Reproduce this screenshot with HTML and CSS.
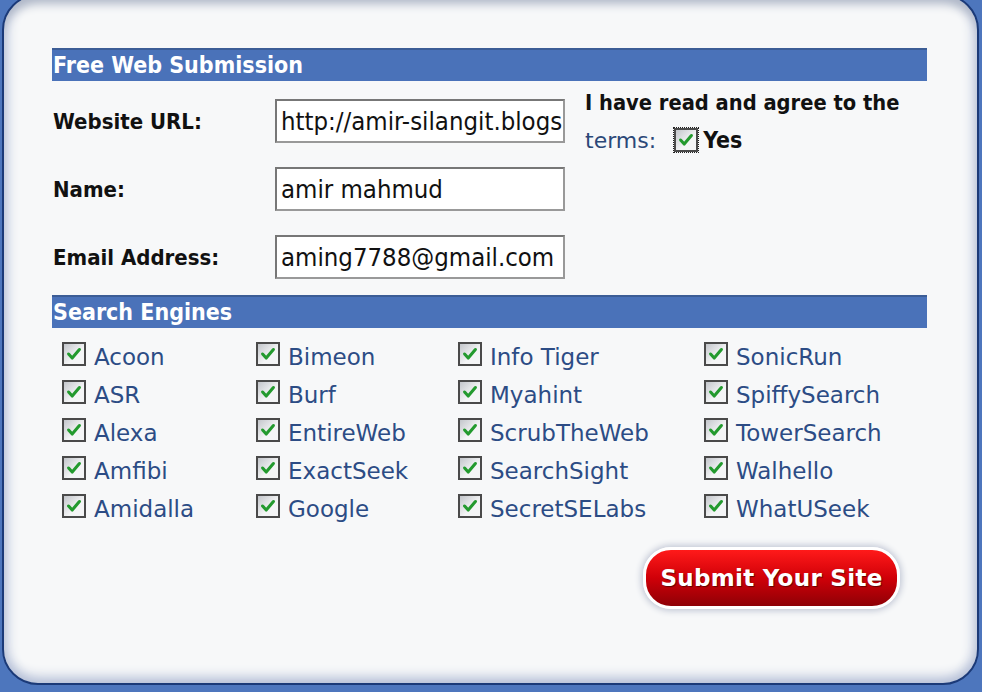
FILE: index.html
```html
<!DOCTYPE html>
<html lang="en">
<head>
    <meta charset="UTF-8">
    <title>Free Web Submission</title>
    <link rel="stylesheet" href="styles.css">
</head>
<body>
    <div class="panel">
        <div class="bar">Free Web Submission</div>

        <div class="details">
            <div class="fields">
                <div class="field">
                    <label class="label">Website URL:</label>
                    <div class="input">http://amir-silangit.blogs</div>
                </div>
                <div class="field">
                    <label class="label">Name:</label>
                    <div class="input">amir mahmud</div>
                </div>
                <div class="field">
                    <label class="label">Email Address:</label>
                    <div class="input">aming7788@gmail.com</div>
                </div>
            </div>
            <div class="agree">
                <div class="agree-line">I have read and agree to the</div>
                <div class="agree-line">
                    <span class="terms">terms:</span>
                    <span class="focus"><span class="check"></span></span>
                    <span class="yes">Yes</span>
                </div>
            </div>
        </div>

        <div class="bar">Search Engines</div>

        <div class="engines">
            <div class="engine"><span class="check"></span>Acoon</div>
            <div class="engine"><span class="check"></span>Bimeon</div>
            <div class="engine"><span class="check"></span>Info Tiger</div>
            <div class="engine"><span class="check"></span>SonicRun</div>

            <div class="engine"><span class="check"></span>ASR</div>
            <div class="engine"><span class="check"></span>Burf</div>
            <div class="engine"><span class="check"></span>Myahint</div>
            <div class="engine"><span class="check"></span>SpiffySearch</div>

            <div class="engine"><span class="check"></span>Alexa</div>
            <div class="engine"><span class="check"></span>EntireWeb</div>
            <div class="engine"><span class="check"></span>ScrubTheWeb</div>
            <div class="engine"><span class="check"></span>TowerSearch</div>

            <div class="engine"><span class="check"></span>Amfibi</div>
            <div class="engine"><span class="check"></span>ExactSeek</div>
            <div class="engine"><span class="check"></span>SearchSight</div>
            <div class="engine"><span class="check"></span>Walhello</div>

            <div class="engine"><span class="check"></span>Amidalla</div>
            <div class="engine"><span class="check"></span>Google</div>
            <div class="engine"><span class="check"></span>SecretSELabs</div>
            <div class="engine"><span class="check"></span>WhatUSeek</div>
        </div>

        <div class="actions">
            <button class="submit">Submit Your Site</button>
        </div>
    </div>
</body>
</html>
```

FILE: styles.css
```css
body {
    margin: 0;
    background: #4d76bd;
    height: 692px;
    overflow: hidden;
    font-family: "DejaVu Sans Condensed", "DejaVu Sans", sans-serif;
}

.panel {
    margin: -6px 3px 0 2px;
    height: 691px;
    box-sizing: border-box;
    padding: 52px 0 0 48px;
    background: #f7f8f9;
    border: 2px solid #1b3a78;
    border-radius: 36px;
    box-shadow: inset 0 12px 10px -4px #b0b8c8, inset 0 -10px 12px -4px #b7c1d8, inset 10px 0 12px -6px #c4cde0, inset -10px 0 12px -6px #c4cde0;
}

.bar {
    width: 875px;
    height: 33px;
    box-sizing: border-box;
    background: #4a72b9;
    border-top: 2px solid #3c5d96;
    color: #fff;
    font-weight: bold;
    font-size: 23px;
    line-height: 31px;
    padding-left: 1px;
}

/* formulario */
.details {
    display: flex;
    padding: 18px 0 16px 1px;
}

.fields {
    display: flex;
    flex-direction: column;
    gap: 24px;
}

.field {
    display: flex;
    align-items: center;
}

.label {
    width: 222px;
    font-weight: bold;
    font-size: 22px;
    color: #111;
}

.input {
    width: 290px;
    height: 44px;
    box-sizing: border-box;
    border: 2px solid #777;
    border-right-color: #999;
    border-bottom-color: #999;
    background: #fff;
    font-size: 25.5px;
    line-height: 40px;
    padding-left: 4px;
    color: #111;
    white-space: nowrap;
    overflow: hidden;
}

.agree {
    margin-left: 20px;
    margin-top: -16px;
    font-size: 21.7px;
}

.agree-line {
    display: flex;
    align-items: center;
    height: 38px;
    font-weight: bold;
    color: #111;
}

.terms {
    font-family: "DejaVu Sans", sans-serif;
    font-weight: normal;
    font-size: 22px;
    color: #2b4878;
    margin-right: 18px;
}

.focus {
    display: inline-flex;
    outline: 1px dotted #222;
    margin-right: 5px;
}

.yes {
    font-weight: bold;
    font-size: 23px;
}

/* casillas */
.check {
    display: inline-block;
    flex: none;
    width: 24px;
    height: 24px;
    box-sizing: border-box;
    border: 2px solid #4a4a4a;
    background: url("data:image/svg+xml,%3Csvg xmlns='http://www.w3.org/2000/svg' viewBox='0 0 20 20'%3E%3Cpath d='M4 10l4 4.5 8-9.5' fill='none' stroke='%23239a2e' stroke-width='3.4' stroke-linecap='round' stroke-linejoin='round'/%3E%3C/svg%3E") no-repeat center / 18px 18px, linear-gradient(135deg, #c3c6cb, #f4f5f6 60%);
}

.engines {
    display: grid;
    grid-template-columns: 194px 202px 246px 200px;
    grid-auto-rows: 38px;
    padding: 10px 0 0 10px;
}

.engine {
    display: flex;
    align-items: center;
    gap: 8px;
    font-family: "DejaVu Sans", sans-serif;
    font-size: 23px;
    color: #2c4c85;
}

.engine .check {
    margin-top: -6px;
}

.actions {
    width: 848px;
    display: flex;
    justify-content: flex-end;
    padding-top: 19px;
}

.submit {
    width: 257px;
    height: 62px;
    border: 3px solid #fff;
    border-radius: 28px;
    background: linear-gradient(to bottom, #ff1a1a, #d00008 50%, #8e0006);
    box-shadow: 0 0 6px 2px #c3c8d6;
    color: #fff;
    font-family: "DejaVu Sans", sans-serif;
    font-weight: bold;
    font-size: 23px;
    text-shadow: 1px 1px 1px #600;
    letter-spacing: 0.3px;
}
```
